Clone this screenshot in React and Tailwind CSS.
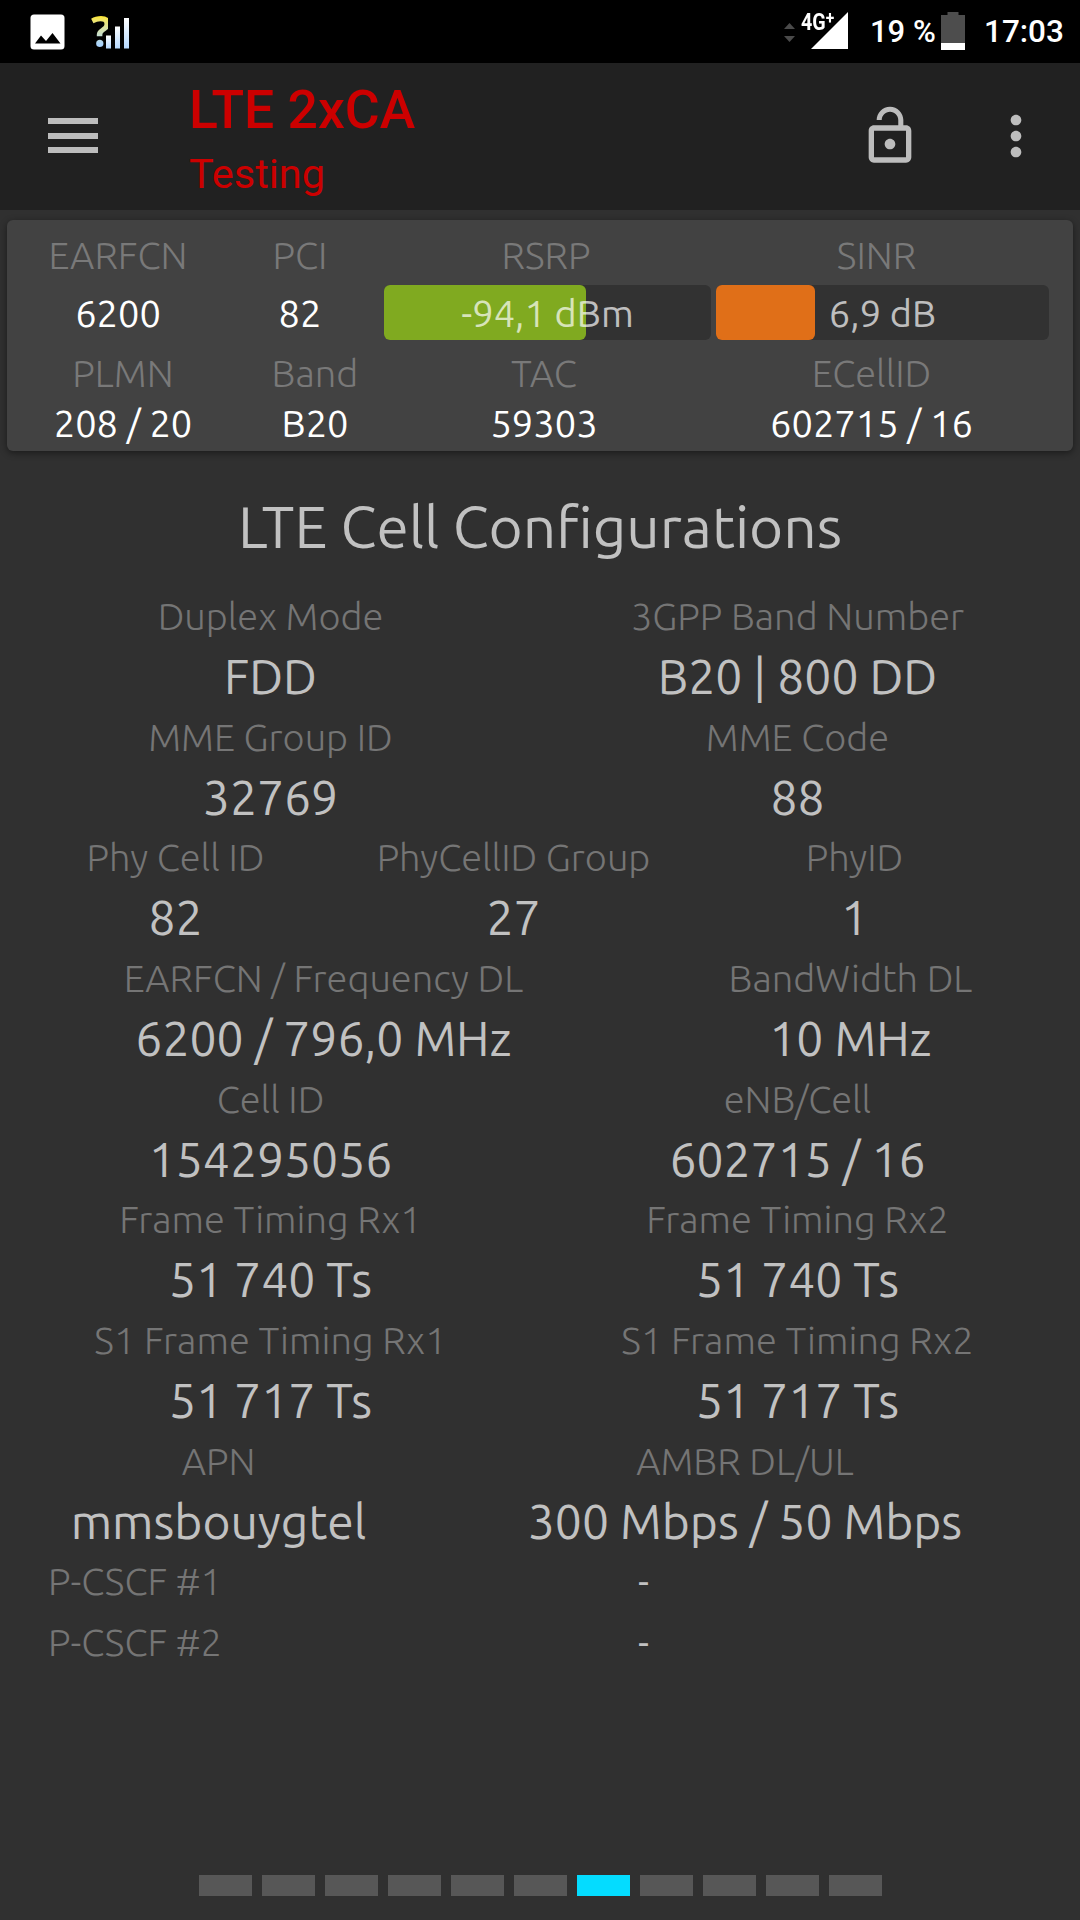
import { MdLockOpen, MdMoreVert } from 'react-icons/md'

const PAGE_COUNT = 11
const ACTIVE_PAGE = 6

const sections = [
  {
    cols: 'grid-cols-[527px_527px]',
    cells: [
      { label: 'Duplex Mode', value: 'FDD' },
      { label: '3GPP Band Number', value: 'B20 | 800 DD' },
    ],
  },
  {
    cols: 'grid-cols-[527px_527px]',
    cells: [
      { label: 'MME Group ID', value: '32769' },
      { label: 'MME Code', value: '88' },
    ],
  },
  {
    cols: 'grid-cols-[337px_339px_343px]',
    cells: [
      { label: 'Phy Cell ID', value: '82' },
      { label: 'PhyCellID Group', value: '27' },
      { label: 'PhyID', value: '1' },
    ],
  },
  {
    cols: 'grid-cols-[633px_421px]',
    cells: [
      { label: 'EARFCN / Frequency DL', value: '6200 / 796,0 MHz' },
      { label: 'BandWidth DL', value: '10 MHz' },
    ],
  },
  {
    cols: 'grid-cols-[527px_527px]',
    cells: [
      { label: 'Cell ID', value: '154295056' },
      { label: 'eNB/Cell', value: '602715 / 16' },
    ],
  },
  {
    cols: 'grid-cols-[527px_527px]',
    cells: [
      { label: 'Frame Timing Rx1', value: '51 740 Ts' },
      { label: 'Frame Timing Rx2', value: '51 740 Ts' },
    ],
  },
  {
    cols: 'grid-cols-[527px_527px]',
    cells: [
      { label: 'S1 Frame Timing Rx1', value: '51 717 Ts' },
      { label: 'S1 Frame Timing Rx2', value: '51 717 Ts' },
    ],
  },
  {
    cols: 'grid-cols-[423px_630px]',
    cells: [
      { label: 'APN', value: 'mmsbouygtel' },
      { label: 'AMBR DL/UL', value: '300 Mbps / 50 Mbps' },
    ],
  },
]

export default function App() {
  return (
    <div className="w-[1080px] h-[1920px] flex flex-col overflow-hidden bg-[#303030] font-['Ubuntu','Noto_Sans',sans-serif]">
      <StatusBar />
      <Toolbar />
      <SignalCard />

      <h1 className="mt-[40px] h-[70px] text-center text-[58.5px] leading-[70px] text-[#c1c1c1]">
        LTE Cell Configurations
      </h1>

      <div className="mt-[25px] pl-[7px]">
        {sections.map((section, index) => (
          <div key={index} className={`grid h-[120.67px] ${section.cols}`}>
            {section.cells.map((cell) => (
              <div key={cell.label} className="text-center whitespace-nowrap">
                <p className="h-[60px] text-[38px] leading-[60px] font-light text-[#757575]">{cell.label}</p>
                <p className="text-[48px] leading-[60px] text-[#c1c1c1]">{cell.value}</p>
              </div>
            ))}
          </div>
        ))}
        <AddressRow label="P-CSCF #1" value="-" />
        <AddressRow label="P-CSCF #2" value="-" />
      </div>

      {/* Page indicator */}
      <div className="mt-auto mb-[24px] flex justify-center gap-[10px]">
        {Array.from({ length: PAGE_COUNT }, (_, i) => (
          <span key={i} className={`w-[53px] h-[21px] ${i === ACTIVE_PAGE ? 'bg-[#04dcff]' : 'bg-[#575757]'}`} />
        ))}
      </div>
    </div>
  )
}

function StatusBar() {
  return (
    <div className="h-[63px] shrink-0 flex items-start bg-black text-white font-['Roboto',sans-serif] font-medium">
      <svg className="ml-[30px] mt-[14px] w-[35px] h-[36px]" viewBox="0 0 35 36">
        <rect x="0.5" y="0.5" width="34" height="35" rx="3.5" fill="#fff" />
        <path d="M5 29.5 11 21.5 16 27 22.5 19 30.5 29.5Z" fill="#000" />
      </svg>

      {/* Unknown network */}
      <div className="ml-[26px] h-[63px] flex">
        <span className="w-[17px] h-[60px] text-[43px] leading-[62px] font-bold font-['Open_Sans',sans-serif] bg-linear-to-b from-[#ffe600] from-25% to-[#a9d4ff] to-75% bg-clip-text text-transparent">
          ?
        </span>
        <svg className="-ml-[2px] mt-[18px] w-[24px] h-[31px]" viewBox="0 0 24 31">
          <defs>
            <linearGradient id="bars" x1="0" y1="0" x2="0" y2="1">
              <stop offset="0" stopColor="#fff" />
              <stop offset="1" stopColor="#b5d9ff" />
            </linearGradient>
          </defs>
          <rect x="0" y="17.5" width="5" height="13" fill="url(#bars)" />
          <rect x="9" y="8.5" width="5" height="22" fill="url(#bars)" />
          <rect x="18" y="0" width="5" height="30.5" fill="url(#bars)" />
        </svg>
      </div>

      <svg className="ml-auto mt-[23px] w-[11px] h-[20px]" viewBox="0 0 11 20" fill="#4a4a4a">
        <path d="M0 6 5.5 0 11 6Z" />
        <path d="M0 13 5.5 19 11 13Z" />
      </svg>
      <div className="relative ml-[6px] w-[47px] h-[63px]">
        <svg className="absolute left-[10px] top-[12px] w-[37px] h-[37px]" viewBox="0 0 37 37">
          <path d="M37 0V37H0Z" fill="#fff" />
        </svg>
        <span className="absolute left-0 top-[9px] text-[24px] leading-[26px] font-bold origin-left scale-x-[0.82] whitespace-nowrap">
          4G<sup className="text-[19px] leading-none -top-[6px]">+</sup>
        </span>
      </div>
      <span className="ml-[22px] w-[66px] text-[31px] leading-[64px] whitespace-nowrap">19 %</span>
      <svg className="ml-[5px] mt-[12px] w-[24px] h-[38px]" viewBox="0 0 24 38">
        <path d="M6.5 0H17.5V3H24V38H0V3H6.5Z" fill="#4d4d4d" />
        <rect y="31" width="24" height="7" fill="#fff" />
      </svg>
      <span className="ml-[19px] mr-[17px] w-[79px] text-[31.5px] leading-[63px]">17:03</span>
    </div>
  )
}

function Toolbar() {
  return (
    <div className="h-[147px] shrink-0 flex items-start bg-[#212121] text-[#bdbdbd] font-['Roboto',sans-serif]">
      <div className="ml-[48px] mt-[55px] w-[50px] flex flex-col gap-[8.5px]">
        <span className="h-[6px] bg-current" />
        <span className="h-[6px] bg-current" />
        <span className="h-[6px] bg-current" />
      </div>
      <div className="ml-[91px] text-[#cc0000]">
        <p className="mt-[14px] text-[53.5px] leading-[66px] font-medium">LTE 2xCA</p>
        <p className="text-[41.5px] leading-[62px]">Testing</p>
      </div>
      <MdLockOpen className="ml-auto mt-[41px] w-[64px] h-[64px]" />
      <MdMoreVert className="ml-[62px] mr-[32px] mt-[41px] w-[64px] h-[64px]" />
    </div>
  )
}

function SignalCard() {
  return (
    <div className="mx-[7px] mt-[10px] h-[231px] shrink-0 rounded-[6px] bg-[#424242] shadow-[0_2px_7px_rgba(0,0,0,0.45)] text-[38px] text-center text-white whitespace-nowrap">
      <div className="grid grid-cols-[222px_142px_350px_311px] pt-[6px] h-[55px] leading-[58px] font-light text-[#797979]">
        <span>EARFCN</span>
        <span>PCI</span>
        <span>RSRP</span>
        <span>SINR</span>
      </div>
      <div className="flex mt-[10px] h-[55px] leading-[57px]">
        <span className="w-[222px]">6200</span>
        <span className="w-[142px]">82</span>
        <Meter className="ml-[13px] w-[327px]" percent={61.8} color="bg-[#80aa20]" value="-94,1 dBm" />
        <Meter className="ml-[5px] w-[333px]" percent={29.8} color="bg-[#e06f18]" value="6,9 dB" />
      </div>
      <div className="grid grid-cols-[232px_152px_306px_349px] h-[60px] leading-[67px] font-light text-[#797979]">
        <span>PLMN</span>
        <span>Band</span>
        <span>TAC</span>
        <span>ECellID</span>
      </div>
      <div className="grid grid-cols-[232px_152px_306px_349px] h-[50px] leading-[47px]">
        <span>208 / 20</span>
        <span>B20</span>
        <span>59303</span>
        <span>602715 / 16</span>
      </div>
    </div>
  )
}

function Meter({ className, percent, color, value }) {
  return (
    <div className={`relative h-[55px] rounded-[6px] bg-[#323232] ${className}`}>
      <div className={`absolute inset-y-0 left-0 rounded-[6px] ${color}`} style={{ width: `${percent}%` }} />
      <span className="relative text-white/70">{value}</span>
    </div>
  )
}

function AddressRow({ label, value }) {
  return (
    <div className="flex h-[60.33px] pl-[41px] leading-[60px] text-[38px]">
      <span className="w-[590px] font-light text-[#757575]">{label}</span>
      <span className="text-[#c1c1c1]">{value}</span>
    </div>
  )
}
